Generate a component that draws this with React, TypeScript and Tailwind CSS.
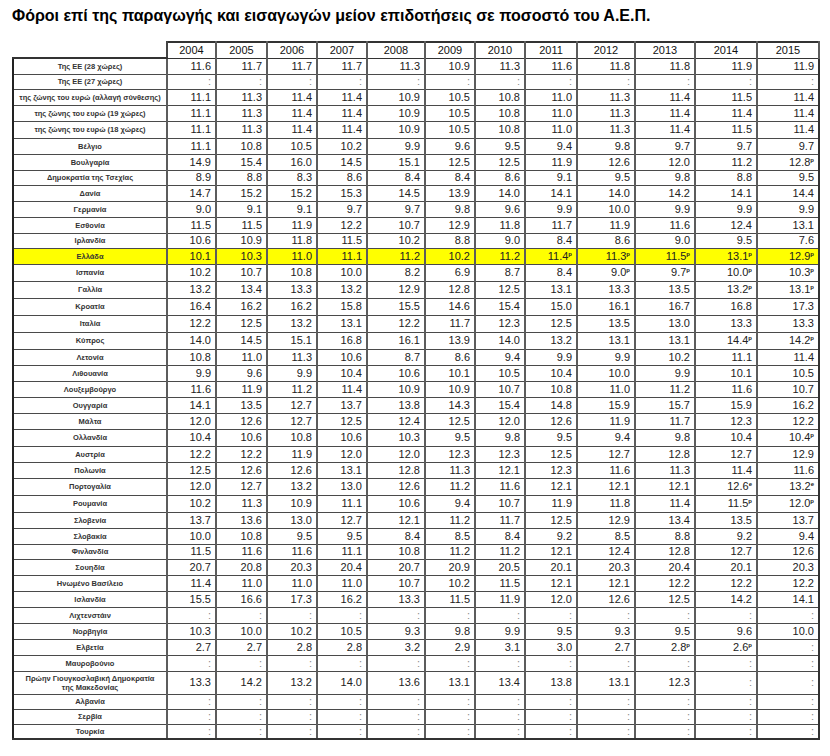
import React from "react";

type Row = {
  label: React.ReactNode;
  values: string[];
  h?: number;
  highlight?: boolean;
};

const years = [2004, 2005, 2006, 2007, 2008, 2009, 2010, 2011, 2012, 2013, 2014, 2015];
const colWidths = [
  "w-[49px]", "w-[51px]", "w-[50px]", "w-[50px]", "w-[58px]", "w-[50px]",
  "w-[50px]", "w-[52px]", "w-[58px]", "w-[60px]", "w-[62px]", "w-[62px]",
];

const heights: Record<number, string> = {
  15: "h-[15px]",
  16: "h-[16px]",
  17: "h-[17px]",
  23: "h-[23px]",
};

const empty = Array(12).fill(":");

const rows: Row[] = [
  { label: "Της ΕΕ (28 χώρες)", values: "11.6 11.7 11.7 11.7 11.3 10.9 11.3 11.6 11.8 11.8 11.9 11.9".split(" ") },
  { label: "Της ΕΕ (27 χώρες)", values: empty, h: 15 },
  { label: "της ζώνης του ευρώ (αλλαγή σύνθεσης)", values: "11.1 11.3 11.4 11.4 10.9 10.5 10.8 11.0 11.3 11.4 11.5 11.4".split(" ") },
  { label: "της ζώνης του ευρώ (19 χώρες)", values: "11.1 11.3 11.4 11.4 10.9 10.5 10.8 11.0 11.3 11.4 11.4 11.4".split(" ") },
  { label: "της ζώνης του ευρώ (18 χώρες)", values: "11.1 11.3 11.4 11.4 10.9 10.5 10.8 11.0 11.3 11.4 11.5 11.4".split(" "), h: 17 },
  { label: "Βέλγιο", values: "11.1 10.8 10.5 10.2 9.9 9.6 9.5 9.4 9.8 9.7 9.7 9.7".split(" ") },
  { label: "Βουλγαρία", values: "14.9 15.4 16.0 14.5 15.1 12.5 12.5 11.9 12.6 12.0 11.2 12.8p".split(" ") },
  { label: "Δημοκρατία της Τσεχίας", values: "8.9 8.8 8.3 8.6 8.4 8.4 8.6 9.1 9.5 9.8 8.8 9.5".split(" "), h: 15 },
  { label: "Δανία", values: "14.7 15.2 15.2 15.3 14.5 13.9 14.0 14.1 14.0 14.2 14.1 14.4".split(" ") },
  { label: "Γερμανία", values: "9.0 9.1 9.1 9.7 9.7 9.8 9.6 9.9 10.0 9.9 9.9 9.9".split(" ") },
  { label: "Εσθονία", values: "11.5 11.5 11.9 12.2 10.7 12.9 11.8 11.7 11.9 11.6 12.4 13.1".split(" ") },
  { label: "Ιρλανδία", values: "10.6 10.9 11.8 11.5 10.2 8.8 9.0 8.4 8.6 9.0 9.5 7.6".split(" "), h: 15 },
  { label: "Ελλάδα", values: "10.1 10.3 11.0 11.1 11.2 10.2 11.2 11.4p 11.3p 11.5p 13.1p 12.9p".split(" "), highlight: true },
  { label: "Ισπανία", values: "10.2 10.7 10.8 10.0 8.2 6.9 8.7 8.4 9.0p 9.7p 10.0p 10.3p".split(" "), h: 17 },
  { label: "Γαλλία", values: "13.2 13.4 13.3 13.2 12.9 12.8 12.5 13.1 13.3 13.5 13.2p 13.1p".split(" "), h: 17 },
  { label: "Κροατία", values: "16.4 16.2 16.2 15.8 15.5 14.6 15.4 15.0 16.1 16.7 16.8 17.3".split(" "), h: 17 },
  { label: "Ιταλία", values: "12.2 12.5 13.2 13.1 12.2 11.7 12.3 12.5 13.5 13.0 13.3 13.3".split(" "), h: 17 },
  { label: "Κύπρος", values: "14.0 14.5 15.1 16.8 16.1 13.9 14.0 13.2 13.1 13.1 14.4p 14.2p".split(" "), h: 17 },
  { label: "Λετονία", values: "10.8 11.0 11.3 10.6 8.7 8.6 9.4 9.9 9.9 10.2 11.1 11.4".split(" ") },
  { label: "Λιθουανία", values: "9.9 9.6 9.9 10.4 10.6 10.1 10.5 10.4 10.0 9.9 10.1 10.5".split(" ") },
  { label: "Λουξεμβούργο", values: "11.6 11.9 11.2 11.4 10.9 10.9 10.7 10.8 11.0 11.2 11.6 10.7".split(" ") },
  { label: "Ουγγαρία", values: "14.1 13.5 12.7 13.7 13.8 14.3 15.4 14.8 15.9 15.7 15.9 16.2".split(" ") },
  { label: "Μάλτα", values: "12.0 12.6 12.7 12.5 12.4 12.5 12.0 12.6 11.9 11.7 12.3 12.2".split(" ") },
  { label: "Ολλανδία", values: "10.4 10.6 10.8 10.6 10.3 9.5 9.8 9.5 9.4 9.8 10.4 10.4p".split(" "), h: 17 },
  { label: "Αυστρία", values: "12.2 12.2 11.9 12.0 12.0 12.3 12.3 12.5 12.7 12.8 12.7 12.9".split(" ") },
  { label: "Πολωνία", values: "12.5 12.6 12.6 13.1 12.8 11.3 12.1 12.3 11.6 11.3 11.4 11.6".split(" ") },
  { label: "Πορτογαλία", values: "12.0 12.7 13.2 13.0 12.6 11.2 11.6 12.1 12.1 12.1 12.6e 13.2e".split(" "), h: 17 },
  { label: "Ρουμανία", values: "10.2 11.3 10.9 11.1 10.6 9.4 10.7 11.9 11.8 11.4 11.5p 12.0p".split(" "), h: 17 },
  { label: "Σλοβενία", values: "13.7 13.6 13.0 12.7 12.1 11.2 11.7 12.5 12.9 13.4 13.5 13.7".split(" ") },
  { label: "Σλοβακία", values: "10.0 10.8 9.5 9.5 8.4 8.5 8.4 9.2 8.5 8.8 9.2 9.4".split(" ") },
  { label: "Φινλανδία", values: "11.5 11.6 11.6 11.1 10.8 11.2 11.2 12.1 12.4 12.8 12.7 12.6".split(" "), h: 15 },
  { label: "Σουηδία", values: "20.7 20.8 20.3 20.4 20.7 20.9 20.5 20.1 20.3 20.4 20.1 20.3".split(" ") },
  { label: "Ηνωμένο Βασίλειο", values: "11.4 11.0 11.0 11.0 10.7 10.2 11.5 12.1 12.1 12.2 12.2 12.2".split(" ") },
  { label: "Ισλανδία", values: "15.5 16.6 17.3 16.2 13.3 11.5 11.9 12.0 12.6 12.5 14.2 14.1".split(" ") },
  { label: "Λιχτενστάιν", values: empty },
  { label: "Νορβηγία", values: "10.3 10.0 10.2 10.5 9.3 9.8 9.9 9.5 9.3 9.5 9.6 10.0".split(" ") },
  { label: "Ελβετία", values: "2.7 2.7 2.8 2.8 3.2 2.9 3.1 3.0 2.7 2.8p 2.6p :".split(" ") },
  { label: "Μαυροβούνιο", values: empty },
  {
    label: (
      <>
        Πρώην Γιουγκοσλαβική Δημοκρατία
        <br />
        της Μακεδονίας
      </>
    ),
    values: "13.3 14.2 13.2 14.0 13.6 13.1 13.4 13.8 13.1 12.3 : :".split(" "),
    h: 23,
  },
  { label: "Αλβανία", values: empty, h: 15 },
  { label: "Σερβία", values: empty, h: 15 },
  { label: "Τουρκία", values: empty, h: 15 },
];

function Value({ v }: { v: string }) {
  if (v === ":") return <span className="text-[#8a8a8a]">:</span>;
  const flag = v.endsWith("p") || v.endsWith("e") ? v.slice(-1) : "";
  const num = flag ? v.slice(0, -1) : v;
  return (
    <>
      {num}
      {flag && <span className="relative -top-[4px] text-[6px] font-bold leading-none">{flag}</span>}
    </>
  );
}

export default function App() {
  return (
    <div className="min-h-screen bg-white pl-[12px] pt-[6px] font-['Liberation_Sans',Arial,sans-serif] text-[#222]">
      <h1 className="text-[16px] font-bold leading-[20px] text-black">
        Φόροι επί της παραγωγής και εισαγωγών μείον επιδοτήσεις σε ποσοστό του Α.Ε.Π.
      </h1>

      <table className="mt-[15px] table-fixed border-collapse">
        <colgroup>
          <col className="w-[154px]" />
          {colWidths.map((w, i) => (
            <col key={i} className={w} />
          ))}
        </colgroup>
        <thead>
          <tr className="h-[16px]">
            <th className="border-0 border-r-2 border-b-2 border-r-[#444] border-b-[#333]"></th>
            {years.map((y) => (
              <th
                key={y}
                className="border-x-2 border-t-2 border-b border-x-[#5c5c5c] border-t-[#333] border-b-[#333] p-0 text-center text-[11px] font-normal leading-none text-[#111]"
              >
                {y}
              </th>
            ))}
          </tr>
        </thead>
        <tbody>
          {rows.map((r, i) => {
            const last = i === rows.length - 1;
            return (
              <tr key={i} className={`${heights[r.h ?? 16]} ${r.highlight ? "bg-[#ffff00]" : ""}`}>
                <td
                  className={`border border-l-2 border-[#4a4a4a] border-l-[#222] p-0 text-center text-[7.5px] font-bold leading-[9px] text-[#333] ${last ? "border-b-2 border-b-[#333]" : ""}`}
                >
                  {r.label}
                </td>
                {r.values.map((v, j) => (
                  <td
                    key={j}
                    className={`border-y border-x-2 border-y-[#4a4a4a] border-x-[#5c5c5c] p-0 pr-[4px] text-right text-[11px] leading-none ${j === 11 ? "border-r-[#333]" : ""} ${last ? "border-b-2 border-b-[#333]" : ""}`}
                  >
                    <Value v={v} />
                  </td>
                ))}
              </tr>
            );
          })}
        </tbody>
      </table>
    </div>
  );
}
